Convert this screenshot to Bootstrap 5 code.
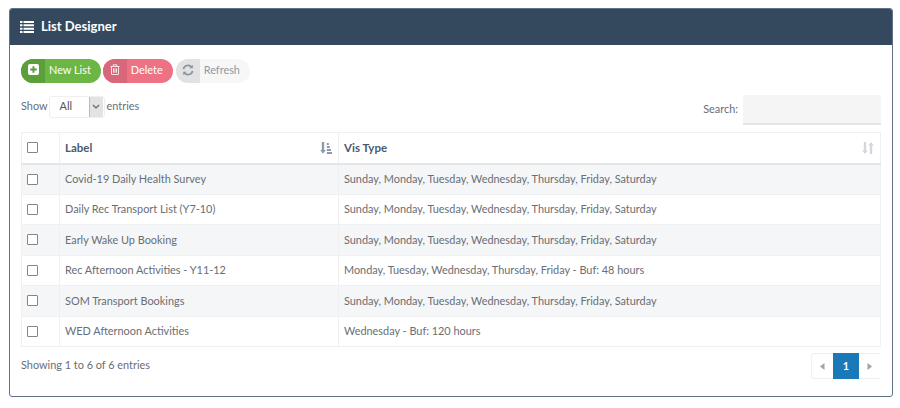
<!DOCTYPE html>
<html lang="en"><head><meta charset="utf-8"><title>List Designer</title>
<link href="https://cdn.jsdelivr.net/npm/bootstrap@5.3.0/dist/css/bootstrap.min.css" rel="stylesheet">
<style>
html,body{background:#fff;height:408px;overflow:hidden}
body{font-family:Lato,"Liberation Sans",sans-serif;font-size:10.9px;color:#696e75;padding:8px 7px 0 9px}
.ld-panel{height:389px;border:1px solid #5f7186;border-radius:3px;overflow:hidden;background:#fff}
.ld-head{height:36px;background:#34495e;color:#fff;font-size:13px;font-weight:700;padding-left:10px;gap:7px}
.ld-body{padding:14px 11px 0 11px}
.ld-btn{height:24px;border-radius:12px;overflow:hidden;font-size:10.9px;color:#fff;padding:0 0 2px;border:0}
.ld-btn .ld-ic{width:24px;height:24px;margin-top:2px;padding-bottom:3px;display:flex;align-items:center;justify-content:center}
.ld-btn .ld-tx{padding:0 10px 0 4px}
.ld-green{background:#6cb646}.ld-green .ld-ic{background:#5a9f3a}
.ld-red{background:#ee7283}.ld-red .ld-ic{background:#d9677a}
.ld-grey{background:#f7f7f7;color:#8d99a6}.ld-grey .ld-ic{background:#e2e2e2}
.ld-grey.ld-btn{margin-left:1px}
.ld-tools{margin-top:12px;height:30px}
.ld-showbox{height:23px;gap:1px}
.ld-sel{width:56px;height:22px;border:1px solid #efefef;border-radius:3px;overflow:hidden;color:#555;padding-right:1px;margin-right:1px}
.ld-sel .ld-val{flex:1;padding-left:10px}
.ld-sel .ld-arr{width:14px;height:100%;background:#e3e3e3;border-left:1px solid #bbb;display:flex;align-items:center;justify-content:center}
.ld-searchbox{gap:5px}
.ld-searchbox span{padding-bottom:2px}
.ld-search{width:138px;height:30px;background:#f5f5f5;border-bottom:2px solid #e5e5e5}
.ld-table{width:860px;margin:7px 0 0 0;table-layout:fixed;border-collapse:collapse;font-size:10.9px;color:#696e75}
.ld-table td,.ld-table th{border:1px solid #eef0f2;padding:0 5px;height:30.5px;vertical-align:middle;background:transparent;color:inherit;font-weight:400;box-shadow:none}
.ld-table thead th{height:31px;border-bottom:2px solid #e4e6e8;color:#4a5a70;font-weight:700;font-size:11.5px;position:relative}
.ld-table tbody tr:nth-child(odd) td{background:#f5f6f7}
.ld-c1{width:38px}.ld-c2{width:279px}
.ld-check{display:block;width:11px;height:11px;border:1px solid #858585;border-radius:1px;background:#fff}
.ld-sort{position:absolute;right:6px;top:9px}
.ld-foot{margin-top:6px;height:26px}
.ld-foot>span{padding-bottom:2px}
.ld-pager{height:26px;border:1px solid #f0f0f0;border-right:0;border-radius:3px 0 0 3px;margin-right:1px}
.ld-pg{width:21px;height:100%;display:flex;align-items:center;justify-content:center}
.ld-pg.ld-on{width:26px;background:#1a7ab9;color:#fff;font-weight:700;height:26px;margin-top:-1px;margin-bottom:-1px}
</style></head><body>
<div class="ld-panel">
 <div class="ld-head d-flex align-items-center">
  <svg width="14" height="12" viewBox="0 0 14 12" fill="#fff"><path d="M0 0h2.500v2H0zM3.500 0H14v2H3.500zM0 3.300h2.500v2H0zM3.500 3.300H14v2H3.500zM0 6.700h2.500v2H0zM3.500 6.700H14v2H3.500zM0 10h2.500v2H0zM3.500 10H14v2H3.500z"/></svg>
  <span>List Designer</span>
 </div>
 <div class="ld-body">
  <div class="d-flex" style="gap:2px">
   <button class="btn ld-btn ld-green d-flex align-items-center"><span class="ld-ic"><svg width="11" height="11" viewBox="0 0 11 11"><rect width="11" height="11" rx="2" fill="#fff"/><path d="M4.500 2.200h2v2.300h2.300v2H6.500v2.300h-2V6.500H2.200v-2h2.300z" fill="#5a9f3a"/></svg></span><span class="ld-tx">New List</span></button>
   <button class="btn ld-btn ld-red d-flex align-items-center"><span class="ld-ic"><svg width="10" height="11" viewBox="0 0 10 11" fill="none" stroke="#fbe3e6"><path d="M.5 2.500h9M3.200 2.500V.8h3.600v1.700M1.500 2.500v7.500a.5.5 0 0 0 .5.5h6a.5.5 0 0 0 .5-.5V2.500M3.500 4.300v4.500M5 4.300v4.500M6.500 4.300v4.500"/></svg></span><span class="ld-tx">Delete</span></button>
   <button class="btn ld-btn ld-grey d-flex align-items-center"><span class="ld-ic"><svg width="12" height="12" viewBox="0 0 12 12" fill="none" stroke="#8a949c" stroke-width="1.700"><path d="M1.400 5a4.700 4.700 0 0 1 8.300-1.800M10.600 7a4.700 4.700 0 0 1-8.300 1.800"/><path d="M10.800.8v3.400H7.400z M1.200 11.200V7.800h3.400z" fill="#8a949c" stroke="none"/></svg></span><span class="ld-tx">Refresh</span></button>
  </div>
  <div class="ld-tools d-flex justify-content-between">
   <div class="ld-showbox d-flex align-items-center"><span>Show</span><div class="ld-sel d-flex align-items-center"><span class="ld-val">All</span><span class="ld-arr"><svg width="8" height="5" viewBox="0 0 8 5" fill="none" stroke="#666" stroke-width="1.200"><path d="M1 1l3 3 3-3"/></svg></span></div><span>entries</span></div>
   <div class="ld-searchbox d-flex align-items-center"><span>Search:</span><div class="ld-search"></div></div>
  </div>
  <table class="table ld-table mb-0">
   <thead><tr><th class="ld-c1"><span class="ld-check"></span></th><th class="ld-c2">Label<svg class="ld-sort" width="12" height="12" viewBox="0 0 12 12" fill="#8f9bab"><path d="M1.800 0h2.400v8h1.600L3 11.800.2 8h1.600zM6.800 1h2v2h-2zM6.800 4h3v2h-3zM6.800 7h4.200v2H6.800zM6.800 10H12v2H6.800z"/></svg></th><th>Vis Type<svg class="ld-sort" width="12" height="12" viewBox="0 0 12 12" fill="#d3d7dc"><path d="M1.800 0h2.400v8.500h1.600L3 12 .2 8.500h1.600zM7.800 12h2.400V3.500h1.600L9 0 6.200 3.500h1.600z"/></svg></th></tr></thead>
   <tbody>
    <tr><td><span class="ld-check"></span></td><td>Covid-19 Daily Health Survey</td><td>Sunday, Monday, Tuesday, Wednesday, Thursday, Friday, Saturday</td></tr>
    <tr><td><span class="ld-check"></span></td><td>Daily Rec Transport List (Y7-10)</td><td>Sunday, Monday, Tuesday, Wednesday, Thursday, Friday, Saturday</td></tr>
    <tr><td><span class="ld-check"></span></td><td>Early Wake Up Booking</td><td>Sunday, Monday, Tuesday, Wednesday, Thursday, Friday, Saturday</td></tr>
    <tr><td><span class="ld-check"></span></td><td>Rec Afternoon Activities - Y11-12</td><td>Monday, Tuesday, Wednesday, Thursday, Friday - Buf: 48 hours</td></tr>
    <tr><td><span class="ld-check"></span></td><td>SOM Transport Bookings</td><td>Sunday, Monday, Tuesday, Wednesday, Thursday, Friday, Saturday</td></tr>
    <tr><td><span class="ld-check"></span></td><td>WED Afternoon Activities</td><td>Wednesday - Buf: 120 hours</td></tr>
   </tbody>
  </table>
  <div class="ld-foot d-flex justify-content-between align-items-center">
   <span>Showing 1 to 6 of 6 entries</span>
   <div class="ld-pager d-flex align-items-center">
    <span class="ld-pg"><svg width="5" height="7" viewBox="0 0 5 7" fill="#a9a39b"><path d="M4.500 0v7L0 3.500z"/></svg></span><span class="ld-pg ld-on">1</span><span class="ld-pg"><svg width="5" height="7" viewBox="0 0 5 7" fill="#9aa3ad"><path d="M.5 0v7L5 3.500z"/></svg></span>
   </div>
  </div>
 </div>
</div>
<script src="https://cdn.jsdelivr.net/npm/bootstrap@5.3.0/dist/js/bootstrap.bundle.min.js"></script>
</body></html>
